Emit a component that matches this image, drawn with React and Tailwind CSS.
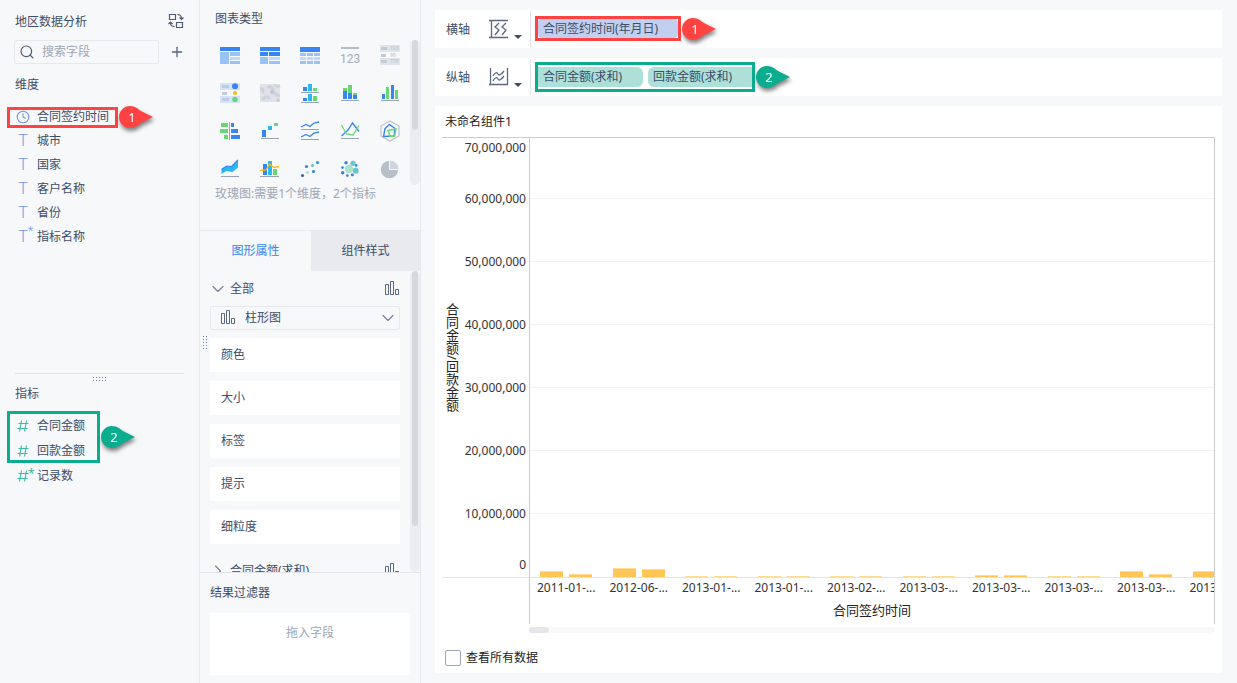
import { useState } from "react";
import { ChevronDown, ChevronRight, Clock, Plus, Search } from "lucide-react";

const BLUE = "#3685f2";
const CYAN = "#27b9ef";
const GREEN = "#68d773";
const LINE = "#9aa3b2";

const DIMENSIONS = [
  { name: "合同签约时间", type: "date", marked: true },
  { name: "城市", type: "text" },
  { name: "国家", type: "text" },
  { name: "客户名称", type: "text" },
  { name: "省份", type: "text" },
  { name: "指标名称", type: "text", derived: true },
];

const ATTRIBUTES = ["颜色", "大小", "标签", "提示", "细粒度"];

const TICKS = [
  "60,000,000",
  "50,000,000",
  "40,000,000",
  "30,000,000",
  "20,000,000",
  "10,000,000",
];

// bar heights in px above the base line
const SERIES = [
  { label: "2011-01-...", bars: [6, 3] },
  { label: "2012-06-...", bars: [9, 8] },
  { label: "2013-01-...", bars: [1, 1] },
  { label: "2013-01-...", bars: [1, 1] },
  { label: "2013-02-...", bars: [1, 1] },
  { label: "2013-03-...", bars: [1, 1] },
  { label: "2013-03-...", bars: [2, 2] },
  { label: "2013-03-...", bars: [1, 1] },
  { label: "2013-03-...", bars: [6, 3] },
  { label: "2013-03-...", bars: [6, 3] },
];

const CHART_TYPES = [
  {
    name: "分组表",
    art: (
      <>
        <path fill={BLUE} d="M0 1h20v4H0z" />
        <path fill="#99c2f6" d="M0 6h9v12H0zM10 6h10v4H10zM10 15h10v3H10z" />
        <path fill="#bfd9fb" d="M10 11h10v3H10z" />
      </>
    ),
  },
  {
    name: "交叉表",
    art: (
      <>
        <path fill={BLUE} d="M0 1h20v4H0zM0 6h8v4H0zM9 6h11v4H9z" />
        <path fill="#99c2f6" d="M0 11h8v7H0zM9 15h11v3H9z" />
        <path fill="#bfd9fb" d="M9 11h11v3H9z" />
      </>
    ),
  },
  {
    name: "明细表",
    art: (
      <>
        <path fill={BLUE} d="M0 1h20v5H0z" />
        <path
          fill="#99c2f6"
          d="M0 7h6v3H0zM7 7h6v3H7zM14 7h6v3h-6zM0 15h6v3H0zM7 15h6v3H7zM14 15h6v3h-6z"
        />
        <path fill="#bfd9fb" d="M0 11h6v3H0zM7 11h6v3H7zM14 11h6v3h-6z" />
      </>
    ),
  },
  {
    name: "KPI指标卡",
    art: (
      <>
        <path fill="#b3bcc9" d="M1 1h18v2H1z" />
        <text x="10" y="17" textAnchor="middle" fontSize="12" fontFamily="Roboto, sans-serif" fill="#a1abba">
          123
        </text>
      </>
    ),
  },
  {
    name: "颜色表格",
    art: (
      <>
        <path fill="#dfe3ea" d="M0-1h20v7H0zM0 12h20v7H0z" />
        <path fill="#c5cbd6" d="M1 1h6v3H1zM1 8h5v3H1zM1 14h6v3H1z" />
        <g fontSize="5" fontFamily="Roboto, sans-serif" fill="#b9c0cc">
          <text x="10" y="4">123</text>
          <text x="10" y="11">90</text>
          <text x="10" y="17">778</text>
        </g>
      </>
    ),
  },
  {
    name: "热力区域图",
    art: (
      <>
        <path fill="#d5e2fb" d="M0-1h20v7H0zM0 12h20v7H0z" />
        <path fill="#c0cbe0" d="M2 1h7v3H2zM2 8h5v3H2zM2 14h7v3H2z" />
        <circle cx="15" cy="2.3" r="3" fill={BLUE} />
        <circle cx="15" cy="9" r="2" fill="#fdba12" />
        <circle cx="15" cy="15.4" r="2.7" fill={GREEN} />
      </>
    ),
  },
  {
    name: "流向地图",
    art: (
      <>
        <path fill="#dfe2e9" d="M0 0h20v18H0z" />
        <g fill="none" stroke="#cdd2db" strokeWidth="3">
          <path d="M8 4c2-3 5 0 5 3s5 3 6 6" />
          <path d="M0 5c3-1 4 2 2 4" />
          <path d="M3 16c1-4 5-4 6-1" />
          <path d="M15 0c0 2 3 3 5 2" />
        </g>
        <circle cx="12" cy="8" r="2" fill="#bec5d0" />
        <circle cx="4" cy="14" r="1.5" fill="#cfd4dd" />
        <circle cx="18" cy="16" r="1.5" fill="#bec5d0" />
      </>
    ),
  },
  {
    name: "多系列柱形图",
    art: (
      <>
        <path fill={BLUE} d="M3 3h4v4H3zM3 14h4v3H3z" />
        <path fill={CYAN} d="M8 0h4v7H8zM8 10h4v7H8z" />
        <path fill={GREEN} d="M13 4h4v3h-4zM13 12h4v5h-4z" />
        <path fill={LINE} d="M1 8h18v1H1zM1 18h18v1H1z" />
      </>
    ),
  },
  {
    name: "堆积柱形图",
    art: (
      <>
        <path fill={GREEN} d="M3 4h4v3H3zM8 1h4v8H8zM13 9h4v2h-4z" />
        <path fill={BLUE} d="M3 7h4v8H3zM8 9h4v6H8zM13 11h4v4h-4z" />
        <path fill={LINE} d="M1 16h18v1H1z" />
      </>
    ),
  },
  {
    name: "分组柱形图",
    art: (
      <>
        <path fill={BLUE} d="M2 10h3v5H2zM11 1h3v14h-3z" />
        <path fill={GREEN} d="M6 3h3v12H6zM15 6h3v9h-3z" />
        <path fill={LINE} d="M1 16h18v1H1z" />
      </>
    ),
  },
  {
    name: "对比柱状图",
    art: (
      <>
        <path fill={GREEN} d="M1 1h7v4H1zM0 7h8v4H0zM4 13h4v4H4z" />
        <path fill={BLUE} d="M11 1h3v4h-3zM11 7h7v4h-7zM11 13h9v4h-9z" />
        <path fill={LINE} d="M9 0h1v18H9z" />
      </>
    ),
  },
  {
    name: "瀑布图",
    art: (
      <>
        <path fill={BLUE} d="M2 8h4v7H2z" />
        <path fill={CYAN} d="M8 4h4v4H8z" />
        <path fill={GREEN} d="M14 1h4v3h-4z" />
        <path fill={LINE} d="M1 16h18v1H1z" />
      </>
    ),
  },
  {
    name: "多系列折线图",
    art: (
      <>
        <g fill="none" stroke={BLUE} strokeWidth="1.3">
          <path d="M1 5l5-2.5 4 2L14 1l5-1" />
          <path d="M1 15l5-2.5 4 2 4-3.5 5-1" />
        </g>
        <path fill={LINE} d="M1 7h18v1H1zM1 17h18v1H1z" />
      </>
    ),
  },
  {
    name: "范围面积图",
    art: (
      <>
        <path fill="none" stroke={BLUE} strokeWidth="1.3" d="M1.5 14L8 8l4.5-7L19 9.5" />
        <path fill="none" stroke={GREEN} strokeWidth="1.3" d="M1.5 3l5 9 6.5 1L19 3.5" />
        <path fill={LINE} d="M1 16h18v1H1z" />
      </>
    ),
  },
  {
    name: "雷达图",
    art: (
      <>
        <path fill="none" stroke="#bcc3cf" strokeWidth="1.2" d="M10-1l9 5v10l-9 5-9-5V4z" />
        <path fill="none" stroke={BLUE} strokeWidth="1.4" d="M9.5 2.5l5.500 4-1 7.500-10.500.5L5 6.500z" />
        <path fill="none" stroke={GREEN} strokeWidth="1.4" d="M8 8.500l8-1.500-1.500 7.500-4.500-.5z" />
      </>
    ),
  },
  {
    name: "面积图",
    art: (
      <>
        <path fill={CYAN} d="M1.5 9.5l5-3.500 5 .5L18 0v7.500L12.500 12l-6-1-5 3z" />
        <path fill="none" stroke={BLUE} strokeWidth="1.2" d="M1.5 9.5l5-3.500 5 .5L18 0" />
        <path fill={LINE} d="M1 16h18v1H1z" />
      </>
    ),
  },
  {
    name: "组合图",
    art: (
      <>
        <path fill={BLUE} d="M3 4h4v11H3z" />
        <path fill={CYAN} d="M8 1h4v14H8z" />
        <path fill={GREEN} d="M13 9h4v6h-4z" />
        <path fill="none" stroke="#fdba12" strokeWidth="1.3" d="M0 10.500l6-.5 3.500-6 4.500 3.500 5-1" />
        <path fill={LINE} d="M0 16h19v1H0z" />
      </>
    ),
  },
  {
    name: "散点图",
    art: (
      <>
        <circle cx="2.500" cy="15.500" r="1.600" fill="#3d5fc0" />
        <circle cx="6.500" cy="6.500" r="1.600" fill="#3583e0" />
        <circle cx="7.500" cy="12.500" r="1.600" fill="#a9e2cb" />
        <circle cx="12.500" cy="5.500" r="1.600" fill="#6cc3d0" />
        <circle cx="13.500" cy="11.500" r="1.600" fill="#3583e0" />
        <circle cx="17.500" cy="2.500" r="1.600" fill="#2f93e2" />
      </>
    ),
  },
  {
    name: "聚合气泡图",
    art: (
      <>
        <circle cx="9" cy="9" r="4.200" fill="#a9e2cb" />
        <circle cx="15.700" cy="10.700" r="3" fill="#6cc3d0" />
        <circle cx="13" cy="3.300" r="2.600" fill="#6cc3d0" />
        <g fill="#3583e0">
          <circle cx="6" cy="2.700" r="1.700" />
          <circle cx="2.500" cy="7.600" r="1.300" />
          <circle cx="2.700" cy="12.700" r="1.700" />
          <circle cx="7.400" cy="15.600" r="1.300" />
          <circle cx="12.300" cy="14.800" r="1.500" />
          <circle cx="16.200" cy="5.400" r="1.300" />
        </g>
      </>
    ),
  },
  {
    name: "玫瑰图",
    art: (
      <>
        <circle cx="9.500" cy="9.500" r="8.700" fill="#b6bfca" />
        <path fill="#d0d5dd" stroke="#f7f8fa" d="M9.500 9.500V0a9.500 9.500 0 0 1 9.500 9.500z" />
      </>
    ),
  },
];

function Callout({ number, color }) {
  return (
    <svg
      viewBox="0 0 34 22"
      className="h-[22px] w-[34px] shrink-0 overflow-visible drop-shadow-[1px_3px_2px_rgba(0,0,0,0.5)]"
    >
      <path
        fill={color}
        d="M11 0c5 0 8 3 11 5l12 6-12 6c-3 2-6 5-11 5a11 11 0 0 1 0-22z"
      />
      <text x="13" y="16" textAnchor="middle" fontSize="13" fill="#fff">
        {number}
      </text>
    </svg>
  );
}

function ColumnIcon() {
  return (
    <svg viewBox="0 0 16 16" className="h-4 w-4 shrink-0" fill="none" stroke="#5a6880">
      <path d="M1.500 3.500h3v10h-3zM6.500.5h3v13h-3zM11.500 8.500h3v5h-3z" />
    </svg>
  );
}

function SwapIcon() {
  return (
    <svg viewBox="0 0 16 16" className="h-4 w-4" fill="none" stroke="#4d5b73" strokeWidth="1.2">
      <path d="M1.500 1.500h6v5h-6zM8.500 9.500h6v5h-6z" />
      <path d="M9.500 1.500c2.500 0 4 1 4 4M11.500 4.500l2 2 2-2M6.500 13.500c-3 0-4-1-4-3.500M.5 11l2-2 2 2" />
    </svg>
  );
}

function FieldIcon({ type, derived }) {
  if (type === "date") {
    return <Clock className="h-3.5 w-3.5 text-[#7095e6]" strokeWidth={1.8} />;
  }
  const star = derived && (
    <span className="absolute -top-1 left-3 text-[12px] leading-4">*</span>
  );
  if (type === "text") {
    return (
      <span className="relative flex w-3.5 justify-center font-[family-name:Roboto,sans-serif] text-[16px] font-light text-[#7095e6]">
        T{star}
      </span>
    );
  }
  return (
    <span className="relative flex w-3.5 justify-center text-[#3cb8a6]">
      <svg viewBox="0 0 12 12" className="h-3 w-3" fill="none" stroke="currentColor" strokeWidth="1.1">
        <path d="M1.500 3.500h10M.5 8.500h10M4.500.5l-2 11M9.500.5l-2 11" />
      </svg>
      {star}
    </span>
  );
}

function Field({ name, type, derived }) {
  return (
    <button type="button" className="flex h-full items-center gap-[7px] px-4 text-left">
      <FieldIcon type={type} derived={derived} />
      {name}
    </button>
  );
}

function FieldPanel() {
  return (
    <aside className="flex w-[200px] shrink-0 flex-col border-r border-[#e6e8ec]">
      <header className="flex h-10 items-center justify-between pt-0.5 pr-[15px] pl-[15px]">
        <h1 className="pt-0.5">地区数据分析</h1>
        <button type="button" aria-label="切换数据">
          <SwapIcon />
        </button>
      </header>

      <div className="flex h-6 shrink-0 items-center gap-[11px] pr-[15px] pl-[14px]">
        <label className="flex h-6 min-w-0 flex-1 items-center gap-[7px] rounded-xs border border-[#e6e8ec] px-1">
          <Search className="h-4 w-4 shrink-0 text-[#4d5b73]" strokeWidth={1.7} />
          <input
            type="text"
            aria-label="搜索字段"
            placeholder="搜索字段"
            className="w-full min-w-0 outline-none placeholder:text-[#9ea6b3]"
          />
        </label>
        <button type="button" aria-label="添加">
          <Plus className="-mx-px h-4 w-4 text-[#5a6880]" strokeWidth={2} />
        </button>
      </div>

      <section className="min-h-0 flex-1">
        <h2 className="flex h-[41px] items-center pt-px pl-[15px]">维度</h2>
        <ul>
          {DIMENSIONS.map((field) => (
            <li key={field.name} className="relative h-6">
              <Field {...field} />
              {field.marked && (
                <div className="pointer-events-none absolute top-px left-[7px] flex items-center gap-px">
                  <div className="h-[21px] w-[111px] border-[3px] border-[#ff4343]" />
                  <Callout number="1" color="#ff4343" />
                </div>
              )}
            </li>
          ))}
        </ul>
      </section>

      <section className="flex h-[310px] shrink-0 flex-col">
        <div className="mx-[15px] flex h-[9px] shrink-0 justify-center border-t border-[#e2e4e9] pt-[3px]">
          <svg viewBox="0 0 13 4" className="h-1 w-[13px] fill-[#76819a]">
            <path d="M0 0h1v1H0zM3 0h1v1H3zM6 0h1v1H6zM9 0h1v1H9zM12 0h1v1h-1zM0 3h1v1H0zM3 3h1v1H3zM6 3h1v1H6zM9 3h1v1H9zM12 3h1v1h-1z" />
          </svg>
        </div>
        <h2 className="flex h-6 items-center pl-[15px]">指标</h2>
        <div className="relative mt-[7px]">
          <ul>
            <li className="h-[25px]">
              <Field name="合同金额" type="number" />
            </li>
            <li className="h-[25px]">
              <Field name="回款金额" type="number" />
            </li>
            <li className="h-[25px]">
              <Field name="记录数" type="number" derived />
            </li>
          </ul>
          <div className="pointer-events-none absolute -top-0.5 left-[7px] flex items-center gap-px">
            <div className="h-[52px] w-[93px] border-[3px] border-[#0aad8e]" />
            <Callout number="2" color="#0aad8e" />
          </div>
        </div>
      </section>
    </aside>
  );
}

function SettingsPanel() {
  const [tab, setTab] = useState("图形属性");

  return (
    <aside className="relative flex w-[221px] shrink-0 flex-col border-r border-[#e6e8ec]">
      <svg viewBox="0 0 4 13" className="absolute top-[336px] left-[3px] h-[13px] w-1 fill-[#76819a]">
        <path d="M0 0h1v1H0zM0 3h1v1H0zM0 6h1v1H0zM0 9h1v1H0zM0 12h1v1H0zM3 0h1v1H3zM3 3h1v1H3zM3 6h1v1H3zM3 9h1v1H3zM3 12h1v1H3z" />
      </svg>

      <section className="flex h-[230px] shrink-0 flex-col">
        <h2 className="flex h-[37px] shrink-0 items-center pt-px pl-[15px]">图表类型</h2>
        <div className="flex">
          <div className="grid flex-1 grid-cols-5 pl-2.5">
            {CHART_TYPES.map(({ name, art }) => (
              <button
                key={name}
                type="button"
                aria-label={name}
                className="flex h-[38px] items-center justify-center"
              >
                <svg viewBox="0 0 20 20" className="h-5 w-5 overflow-visible">
                  {art}
                </svg>
              </button>
            ))}
          </div>
          <div className="mt-[3px] mb-1 w-2.5 rounded-full bg-[#ebedf0] px-0.5">
            <div className="h-[90px] rounded-full bg-[#d6d8de]" />
          </div>
        </div>
        <p className="pl-[15px] leading-[10px] text-[#9ea6b3]">玫瑰图:需要1个维度，2个指标</p>
      </section>

      <div className="grid h-[41px] shrink-0 grid-cols-[111px_1fr] border-t border-[#e6e8ec]">
        {["图形属性", "组件样式"].map((name) => (
          <button
            key={name}
            type="button"
            onClick={() => setTab(name)}
            className={tab === name ? "text-[#3685f2]" : "bg-[#e8eaed]"}
          >
            {name}
          </button>
        ))}
      </div>

      <section className="flex min-h-0 flex-1">
        <div className="min-w-0 flex-1 overflow-hidden pr-2.5 pl-2.5">
          <button type="button" className="flex h-[35px] w-full items-center gap-1">
            <ChevronDown className="-mx-0.5 h-5 w-5 text-[#76819a]" strokeWidth={1.4} />
            <span className="flex-1 text-left">全部</span>
            <ColumnIcon />
          </button>
          <div className="relative flex h-6 items-center rounded-xs border border-[#e6e8ec]">
            <select
              aria-label="图形"
              className="h-full w-full appearance-none pr-6 pl-[34px] outline-none"
            >
              <option>柱形图</option>
            </select>
            <span className="pointer-events-none absolute inset-0 flex items-center justify-between pr-px pl-[9px]">
              <ColumnIcon />
              <ChevronDown className="h-5 w-5 text-[#76819a]" strokeWidth={1.4} />
            </span>
          </div>
          <div className="mt-2 flex flex-col gap-[9px]">
            {ATTRIBUTES.map((name) => (
              <button key={name} type="button" className="h-[34px] bg-white pl-[11px] text-left">
                {name}
              </button>
            ))}
          </div>
          <button type="button" className="mt-2 flex h-[37px] w-full items-center gap-1">
            <ChevronRight className="-mx-0.5 h-5 w-5 text-[#76819a]" strokeWidth={1.4} />
            <span className="flex-1 text-left">合同金额(求和)</span>
            <ColumnIcon />
          </button>
        </div>
        <div className="w-2.5 rounded-full bg-[#ebedf0] px-0.5">
          <div className="h-[255px] rounded-full bg-[#d6d8de]" />
        </div>
      </section>

      <section className="shrink-0 border-t border-[#e2e4e9] px-2.5 pb-2">
        <h2 className="flex h-10 items-center">结果过滤器</h2>
        <div className="h-[62px] bg-white pt-2.5 text-center leading-5 text-[#9ea6b3]">拖入字段</div>
      </section>
    </aside>
  );
}

function AxisRow({ label, icon, children }) {
  return (
    <div className="flex h-[38px] shrink-0 items-center bg-white pl-[11px]">
      <span className="w-[43px] pt-0.5">{label}</span>
      <button type="button" aria-label={`${label}设置`} className="flex w-[41px] items-center gap-[5px]">
        <svg viewBox="0 0 20 20" className="h-5 w-5" fill="none" stroke="#5a6880" strokeWidth="1.3">
          {icon}
        </svg>
        <svg viewBox="0 0 8 4" className="mt-4 h-1 w-2 fill-[#3d4d66]">
          <path d="M0 0h8L4 4z" />
        </svg>
      </button>
      <div className="flex h-9 items-center gap-px border-l border-[#e2e4e9] pb-px pl-1">
        {children}
      </div>
    </div>
  );
}

function ChartCard() {
  return (
    <section className="flex min-h-0 flex-1 flex-col bg-white pr-[7px] pl-[7px] text-[#333]">
      <h2 className="flex h-[31px] shrink-0 items-center pl-[3px] text-[#222]">未命名组件1</h2>

      <div className="grid min-h-0 flex-1 grid-cols-[87px_minmax(0,1fr)] grid-rows-[minmax(0,1fr)_46px] border-t border-[#ccc]">
        <div className="flex items-stretch border-b border-[#e2e2e2]">
          <span className="self-center text-[13px] leading-5 text-[#222] [writing-mode:vertical-rl]">
            合同金额/回款金额
          </span>
          <div className="grid flex-1 grid-rows-[61fr_63fr_63fr_63fr_63fr_63fr_63fr] pr-[3px] text-right">
            <div className="flex flex-col justify-between">
              <span className="leading-5">70,000,000</span>
              <span className="translate-y-1/2 leading-5">{TICKS[0]}</span>
            </div>
            {TICKS.slice(1).map((tick) => (
              <div key={tick} className="flex items-end justify-end">
                <span className="translate-y-1/2 leading-5">{tick}</span>
              </div>
            ))}
            <div className="flex items-end justify-end">
              <span className="leading-6">0</span>
            </div>
          </div>
        </div>

        <div className="grid overflow-hidden border-x border-b border-x-[#ccc] border-b-[#e2e2e2]">
          <div className="col-start-1 row-start-1 grid grid-rows-[61fr_63fr_63fr_63fr_63fr_63fr_63fr]">
            {TICKS.map((tick) => (
              <div key={tick} className="border-b border-[#f3f3f3]" />
            ))}
          </div>
          <div className="col-start-1 row-start-1 grid w-[106%] grid-cols-10">
            {SERIES.map(({ bars }, i) => (
              <div key={i} className="flex items-end justify-center gap-1.5">
                {bars.map((height, n) => (
                  <div
                    key={n}
                    className="w-[23px] border-t border-[#fddb92] bg-[#ffc656]"
                    style={{ height }}
                  />
                ))}
              </div>
            ))}
          </div>
        </div>

        <div />
        <div className="overflow-hidden border-x border-[#ccc]">
          <div className="grid w-[106%] grid-cols-10 text-center leading-5">
            {SERIES.map(({ label }, i) => (
              <span key={i}>{label}</span>
            ))}
          </div>
          <p className="text-center text-[13px] leading-6 text-[#222]">合同签约时间</p>
        </div>
      </div>

      <div className="mt-[3px] ml-[87px] h-1.5 shrink-0 rounded-full bg-[#f8f8f9]">
        <div className="h-1.5 w-5 rounded-full bg-[#e5e6eb]" />
      </div>

      <label className="flex h-10 shrink-0 items-center gap-[5px] pt-2.5 pl-[3px] text-[#222]">
        <input
          type="checkbox"
          className="h-4 w-4 appearance-none rounded-xs border border-[#9aa6ba] checked:bg-[#3685f2]"
        />
        查看所有数据
      </label>
    </section>
  );
}

export default function App() {
  return (
    <div className="flex h-screen overflow-hidden bg-[#f7f8fa] font-[family-name:'Noto_Sans','Noto_Sans_CJK_SC',sans-serif] text-[12px] leading-5 text-[#3d4d66]">
      <FieldPanel />
      <SettingsPanel />
      <main className="flex min-w-0 flex-1 flex-col gap-2.5 py-2.5 pr-[15px] pl-[14px]">
        <AxisRow
          label="横轴"
          icon={
            <>
              <path d="M0 1.500h19M0 18.500h19M2.500 1v18" />
              <path d="M10 4L6 8l4 3-4 5M17 4l-4 4 4 3-4 5" />
            </>
          }
        >
          <div className="border-[3px] border-[#ff4343]">
            <div className="h-[19px] w-[140px] rounded-sm bg-[#c3cfef] pl-[5px] leading-5">
              合同签约时间(年月日)
            </div>
          </div>
          <Callout number="1" color="#ff4343" />
        </AxisRow>

        <AxisRow
          label="纵轴"
          icon={
            <>
              <path d="M1.500 1v17M18.500 1v17M0 17.500h19" />
              <path d="M4 9c2-4 4-4 5-2s3 1 6-3M4 14c2-4 4-4 5-2s3 1 6-3" />
            </>
          }
        >
          <div className="flex gap-[5px] border-[3px] border-[#0aad8e] py-0.5">
            <div className="h-5 w-[105px] rounded-r-md bg-[#aee0da] pl-[5px]">合同金额(求和)</div>
            <div className="h-5 w-[104px] rounded-l-md bg-[#aee0da] pl-[5px]">回款金额(求和)</div>
          </div>
          <Callout number="2" color="#0aad8e" />
        </AxisRow>

        <ChartCard />
      </main>
    </div>
  );
}
